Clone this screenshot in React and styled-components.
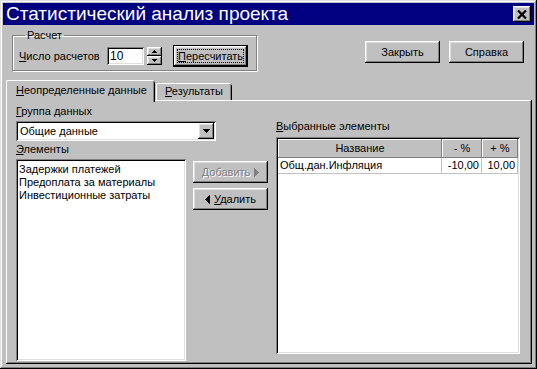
import React from 'react';
import styled, { createGlobalStyle, css } from 'styled-components';

const GlobalStyle = createGlobalStyle`
  html, body {
    margin: 0;
    padding: 0;
    background: #c0c0c0;
  }
  body {
    font-family: "Liberation Sans", Arial, sans-serif;
    font-size: 11px;
    color: #000;
  }
`;

// classic 3d edges

const raised = css`
  box-shadow: inset -1px -1px #000, inset 1px 1px #fff, inset -2px -2px #808080,
    inset 2px 2px #dfdfdf;
`;

const sunken = css`
  box-shadow: inset 1px 1px #808080, inset -1px -1px #fff, inset 2px 2px #000,
    inset -2px -2px #dfdfdf;
`;

const Window = styled.div`
  width: 537px;
  height: 369px;
  box-sizing: border-box;
  padding: 3px;
  background: #c0c0c0;
  box-shadow: inset -1px -1px #000, inset 1px 1px #dfdfdf, inset -2px -2px #808080,
    inset 2px 2px #fff;
  display: flex;
  flex-direction: column;
`;

const TitleBar = styled.div`
  height: 22px;
  background: #000080;
  display: flex;
  align-items: center;
  justify-content: space-between;
  padding: 0 3px 0 3px;
`;

const Title = styled.span`
  color: #fff;
  font-size: 19px;
  line-height: 22px;
`;

const CloseButton = styled.div`
  width: 18px;
  height: 16px;
  background: #c0c0c0;
  ${raised};
  display: flex;
  align-items: center;
  justify-content: center;
`;

const TopRow = styled.div`
  display: flex;
  align-items: flex-start;
  padding: 0 10px 0 9px;
`;

const GroupBox = styled.fieldset`
  margin: 4px 0 0 0;
  padding: 3px 6px 3px 6px;
  width: 245px;
  box-sizing: border-box;
  border: 1px solid #808080;
  box-shadow: inset 1px 1px #fff, 1px 1px #fff;
  min-inline-size: 0;
`;

const Legend = styled.legend`
  margin-left: 6px;
  padding: 0 2px;
  line-height: 13px;
`;

const GroupRow = styled.div`
  display: flex;
  align-items: center;
`;

const Label = styled.span`
  line-height: 13px;
  width: ${(p) => (p.$width ? `${p.$width}px` : 'auto')};
  margin-top: ${(p) => p.$mt || 0}px;
  flex-shrink: 0;
`;

const NumberField = styled.div`
  width: 37px;
  height: 18px;
  box-sizing: border-box;
  background: #fff;
  ${sunken};
  padding: 0 3px;
  display: flex;
  align-items: center;
  font-size: 12px;
`;

const Spinner = styled.div`
  margin-left: 3px;
  width: 15px;
  height: 18px;
  display: flex;
  flex-direction: column;
`;

const SpinPart = styled.div`
  flex: 1;
  background: #c0c0c0;
  ${raised};
  display: flex;
  align-items: center;
  justify-content: center;
`;

const Button = styled.div`
  width: ${(p) => p.$width || 75}px;
  height: 22px;
  box-sizing: border-box;
  background: #c0c0c0;
  ${raised};
  display: flex;
  align-items: center;
  justify-content: center;
  gap: 4px;
  line-height: 13px;
  color: ${(p) => (p.$disabled ? '#808080' : '#000')};
  text-shadow: ${(p) => (p.$disabled ? '1px 1px 0 #fff' : 'none')};
  flex-shrink: 0;
`;

const DefaultButton = styled.div`
  width: 75px;
  height: 22px;
  box-sizing: border-box;
  margin-left: 11px;
  border: 1px solid #000;
  background: #c0c0c0;
  ${raised};
  padding: 3px;
  display: flex;
`;

const FocusRect = styled.div`
  flex: 1;
  border: 1px dotted #000;
  display: flex;
  align-items: center;
  justify-content: center;
  line-height: 13px;
`;

const RightButtons = styled.div`
  margin-left: auto;
  margin-top: 16px;
  display: flex;
  gap: 9px;
`;

const TabStrip = styled.div`
  display: flex;
  align-items: flex-end;
  height: 20px;
  margin-top: 9px;
  padding-left: 3px;
  position: relative;
  z-index: 1;
`;

const Tab = styled.div`
  box-sizing: border-box;
  width: ${(p) => p.$width}px;
  height: ${(p) => (p.$active ? 22 : 17)}px;
  margin-bottom: ${(p) => (p.$active ? -2 : 0)}px;
  margin-left: ${(p) => (p.$active ? 0 : 1)}px;
  padding: ${(p) => (p.$active ? '4px 0 0 10px' : '2px 0 0 9px')};
  background: #c0c0c0;
  border-radius: 2px 2px 0 0;
  box-shadow: inset 1px 0 #fff, inset 0 1px #fff, inset -1px 0 #000,
    inset -2px 0 #808080;
  line-height: 13px;
`;

const Panel = styled.div`
  flex: 1;
  margin: 0 2px 2px 3px;
  padding: 5px 12px 3px 10px;
  background: #c0c0c0;
  box-shadow: inset -1px -1px #000, inset 1px 1px #fff, inset -2px -2px #808080;
  display: flex;
`;

const LeftCol = styled.div`
  width: 170px;
  display: flex;
  flex-direction: column;
  flex-shrink: 0;
`;

const Combo = styled.div`
  margin-top: 3px;
  width: 200px;
  height: 20px;
  box-sizing: border-box;
  background: #fff;
  ${sunken};
  padding: 2px 2px 2px 4px;
  display: flex;
  align-items: center;
  justify-content: space-between;
`;

const ComboArrow = styled.div`
  width: 16px;
  height: 16px;
  background: #c0c0c0;
  ${raised};
  display: flex;
  align-items: center;
  justify-content: center;
`;

const ListBox = styled.div`
  flex: 1;
  margin-top: 3px;
  background: #fff;
  ${sunken};
  padding: 4px 3px;
  display: flex;
  flex-direction: column;
`;

const ListItem = styled.div`
  line-height: 13px;
`;

const MidCol = styled.div`
  margin-left: 7px;
  padding-top: 56px;
  display: flex;
  flex-direction: column;
  gap: 5px;
`;

const RightCol = styled.div`
  margin-left: 8px;
  padding-top: 15px;
  width: 244px;
  display: flex;
  flex-direction: column;
  padding-bottom: 7px;
`;

const Grid = styled.div`
  flex: 1;
  margin-top: 4px;
  background: #fff;
  ${sunken};
  padding: 2px;
  display: grid;
  grid-template-columns: 164px 40px 36px;
  grid-auto-rows: min-content;
`;

const HeadCell = styled.div`
  height: 19px;
  background: #c0c0c0;
  box-shadow: inset -1px -1px #808080, inset 1px 1px #fff;
  display: flex;
  align-items: center;
  justify-content: center;
  line-height: 13px;
`;

const Cell = styled.div`
  height: 16px;
  box-sizing: border-box;
  border-right: 1px solid #c0c0c0;
  border-bottom: 1px solid #c0c0c0;
  display: flex;
  align-items: center;
  justify-content: ${(p) => (p.$right ? 'flex-end' : 'flex-start')};
  padding: 0 2px;
  line-height: 13px;
`;

const Tri = ({ dir = 'down', w = 7, h = 4, color = '#000' }) => {
  const pts = {
    down: `0,0 ${w},0 ${w / 2},${h}`,
    up: `0,${h} ${w},${h} ${w / 2},0`,
    right: `0,0 ${w},${h / 2} 0,${h}`,
    left: `${w},0 0,${h / 2} ${w},${h}`,
  }[dir];
  return (
    <svg width={w} height={h} viewBox={`0 0 ${w} ${h}`} shapeRendering="crispEdges">
      <polygon points={pts} fill={color} />
    </svg>
  );
};

export default function App() {
  return (
    <>
      <GlobalStyle />
      <Window>
        <TitleBar>
          <Title>Статистический анализ проекта</Title>
          <CloseButton>
            <svg width="10" height="9" viewBox="0 0 10 9">
              <path d="M1 0.5 L9 8.5 M9 0.5 L1 8.5" stroke="#000" strokeWidth="2.2" />
            </svg>
          </CloseButton>
        </TitleBar>

        <TopRow>
          <GroupBox>
            <Legend>Расчет</Legend>
            <GroupRow>
              <Label $width={88}>
                <u>Ч</u>исло расчетов
              </Label>
              <NumberField>10</NumberField>
              <Spinner>
                <SpinPart>
                  <Tri dir="up" w={5} h={3} />
                </SpinPart>
                <SpinPart>
                  <Tri dir="down" w={5} h={3} />
                </SpinPart>
              </Spinner>
              <DefaultButton>
                <FocusRect>
                  <span>
                    <u>П</u>ересчитать
                  </span>
                </FocusRect>
              </DefaultButton>
            </GroupRow>
          </GroupBox>

          <RightButtons>
            <Button>Закрыть</Button>
            <Button>Справка</Button>
          </RightButtons>
        </TopRow>

        <TabStrip>
          <Tab $active $width={149}>
            <u>Н</u>еопределенные данные
          </Tab>
          <Tab $width={76}>
            <u>Р</u>езультаты
          </Tab>
        </TabStrip>

        <Panel>
          <LeftCol>
            <Label>
              <u>Г</u>руппа данных
            </Label>
            <Combo>
              <span>Общие данные</span>
              <ComboArrow>
                <Tri dir="down" w={7} h={4} />
              </ComboArrow>
            </Combo>
            <Label $mt={2}>
              <u>Э</u>лементы
            </Label>
            <ListBox>
              <ListItem>Задержки платежей</ListItem>
              <ListItem>Предоплата за материалы</ListItem>
              <ListItem>Инвестиционные затраты</ListItem>
            </ListBox>
          </LeftCol>

          <MidCol>
            <Button $disabled>
              <span>
                <u>Д</u>обавить
              </span>
              <Tri dir="right" w={5} h={9} color="#808080" />
            </Button>
            <Button>
              <Tri dir="left" w={5} h={9} />
              <span>
                <u>У</u>далить
              </span>
            </Button>
          </MidCol>

          <RightCol>
            <Label>
              <u>В</u>ыбранные элементы
            </Label>
            <Grid>
              <HeadCell>Название</HeadCell>
              <HeadCell>- %</HeadCell>
              <HeadCell>+ %</HeadCell>
              <Cell>Общ.дан.Инфляция</Cell>
              <Cell $right>-10,00</Cell>
              <Cell $right>10,00</Cell>
            </Grid>
          </RightCol>
        </Panel>
      </Window>
    </>
  );
}
